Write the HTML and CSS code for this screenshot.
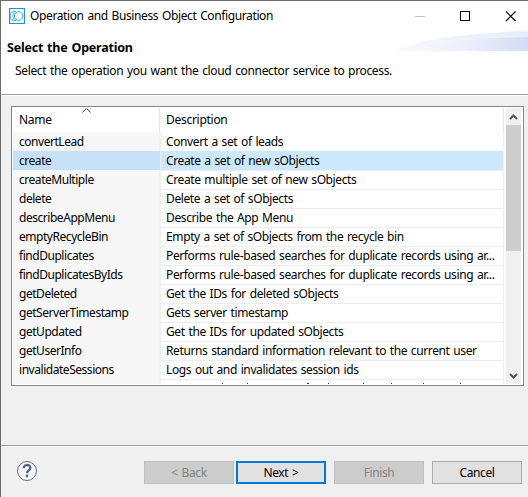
FILE: index.html
```
<!DOCTYPE html>
<html lang="en">
<head>
<meta charset="utf-8">
<title>Operation and Business Object Configuration</title>
<link rel="stylesheet" href="styles.css">
</head>
<body>
<div class="window">
  <div class="titlebar">
    <svg class="app-icon" width="16" height="16" viewBox="0 0 16 16" fill="none" stroke="#1a9ad0"><rect x=".5" y=".5" width="15" height="15" stroke-width="1.2"/><circle cx="9.7" cy="8" r="4.3" stroke-width=".9"/><path d="M7 3.6a4.6 4.6 0 1 0 0 8.8M5.5 4.6a4.5 4.5 0 0 0 0 6.800" stroke-width=".8"/></svg>
    <span class="title">Operation and Business Object Configuration</span>
    <svg class="controls" width="102" height="12" viewBox="0 0 102 12" fill="none"><path d="M0 6.500h10" stroke="#c4c4c4"/><rect x="45.500" y="1.500" width="9" height="9" stroke="#000"/><path d="M91 1.500l9.500 9.500M100.500 1.500L91 11" stroke="#000" stroke-width="1.1"/></svg>
  </div>
  <div class="banner">
    <svg class="swoosh" width="134" height="20" viewBox="0 0 134 20"><defs><linearGradient id="a"><stop offset="0" stop-color="#f7f9fd"/><stop offset="1" stop-color="#e6ecfa"/></linearGradient><linearGradient id="b"><stop offset="0" stop-color="#f7f9fd"/><stop offset=".5" stop-color="#edf1fb"/><stop offset="1" stop-color="#d3dcf4"/></linearGradient></defs><path d="M0 20Q35 3 134 0V20z" fill="url(#a)"/><path d="M2 20Q55 8 134 6V20z" fill="url(#b)"/></svg>
    <h1>Select the Operation</h1>
    <p>Select the operation you want the cloud connector service to process.</p>
  </div>
  <div class="content">
    <div class="table">
      <div class="grid">
        <div class="head"><span class="name">Name<svg class="sort" width="9" height="5" viewBox="0 0 9 5" fill="none" stroke="#555"><path d="M.5 4.500l4-4 4 4"/></svg></span><span class="desc">Description</span></div>
        <div class="row"><span class="name">convertLead</span><span class="desc">Convert a set of leads</span></div>
        <div class="row selected"><span class="name">create</span><span class="desc">Create a set of new sObjects</span></div>
        <div class="row"><span class="name">createMultiple</span><span class="desc">Create multiple set of new sObjects</span></div>
        <div class="row"><span class="name">delete</span><span class="desc">Delete a set of sObjects</span></div>
        <div class="row"><span class="name">describeAppMenu</span><span class="desc">Describe the App Menu</span></div>
        <div class="row"><span class="name">emptyRecycleBin</span><span class="desc">Empty a set of sObjects from the recycle bin</span></div>
        <div class="row"><span class="name">findDuplicates</span><span class="desc">Performs rule-based searches for duplicate records using ar...</span></div>
        <div class="row"><span class="name">findDuplicatesByIds</span><span class="desc">Performs rule-based searches for duplicate records using ar...</span></div>
        <div class="row"><span class="name">getDeleted</span><span class="desc">Get the IDs for deleted sObjects</span></div>
        <div class="row"><span class="name">getServerTimestamp</span><span class="desc">Gets server timestamp</span></div>
        <div class="row"><span class="name">getUpdated</span><span class="desc">Get the IDs for updated sObjects</span></div>
        <div class="row"><span class="name">getUserInfo</span><span class="desc">Returns standard information relevant to the current user</span></div>
        <div class="row"><span class="name">invalidateSessions</span><span class="desc">Logs out and invalidates session ids</span></div>
        <div class="row"><span class="name"></span><span class="desc"><svg class="clipped-line" width="320" height="5" viewBox="0 0 320 5" stroke="#333"><path d="M56 4.500h1M81 4.500h1M141 4.500h2M162 4.500h1M197 4.500h1M225 4.500h1M257 4.500h1M294 4.500h1"/></svg></span></div>
      </div>
      <div class="scrollbar">
        <svg width="15" height="17" viewBox="0 0 15 17" fill="none" stroke="#555" stroke-width="2"><path d="M4 11l3.500-3.500L11 11"/></svg>
        <div class="thumb"></div>
        <svg class="down" width="15" height="17" viewBox="0 0 15 17" fill="none" stroke="#555" stroke-width="2"><path d="M4 7l3.500 3.500L11 7"/></svg>
      </div>
    </div>
  </div>
  <div class="footer">
    <svg class="help" width="22" height="22" viewBox="0 0 22 22"><circle cx="11" cy="11" r="9.500" fill="#f5f6f9" stroke="#5c6d8e"/><path d="M7.700 8.300C7.700 4 14.300 4 14.300 7.900C14.300 10.300 11 10.300 11 13.300" fill="none" stroke="#56678c" stroke-width="2.300"/><circle cx="11" cy="16" r="1.400" fill="#56678c"/></svg>
    <button class="back" disabled>&lt; Back</button>
    <button class="next">Next &gt;</button>
    <button class="finish" disabled>Finish</button>
    <button class="cancel">Cancel</button>
  </div>
</div>
</body>
</html>
```
FILE: styles.css
```
* { box-sizing: border-box; }
body { margin: 0; width: 528px; height: 497px; overflow: hidden; font: 12px "Noto Sans", sans-serif; letter-spacing: -0.38px; word-spacing: 1px; color: #000; }
.window { height: 497px; border: solid #6b6b6b; border-width: 1px 0 0 1px; background: #f0f0f0; display: flex; flex-direction: column; }
.titlebar { height: 29px; background: #fff; display: flex; align-items: center; padding: 0 11px 0 8px; flex: none; }
.app-icon { margin-right: 5px; }
.title { letter-spacing: -0.38px; }
.controls { margin-left: auto; }
.banner { position: relative; height: 66px; flex: none; background: #fff; border-bottom: 1px solid #fff; box-shadow: inset 0 -1px #a0a0a0; }
.banner h1 { margin: 0; padding: 9px 0 0 6px; font-size: 12.5px; line-height: 18px; font-weight: 700; letter-spacing: -0.22px; }
.banner p { margin: 0; padding: 5px 0 0 14px; line-height: 18px; letter-spacing: -0.34px; }
.swoosh { position: absolute; right: 0; top: 1px; }
.content { padding: 10px 4px 0 10px; height: 349px; flex: none; }
.table { width: 513px; height: 280px; border: 1px solid #828790; padding: 1px; background: #fff; display: flex; justify-content: space-between; }
.grid { width: 491px; height: 276px; overflow: hidden; }
.head, .row { display: grid; grid-template-columns: 147px 344px; }
.head { height: 24px; line-height: 23px; letter-spacing: -0.28px; }
.head .name { position: relative; border-right: 1px solid #e5e5e5; }
.head .desc { border-right: 1px solid #e5e5e5; }
.sort { position: absolute; left: 69px; top: 0; }
.name { padding-left: 6px; }
.desc { padding-left: 6px; white-space: nowrap; }
.row { height: 19px; line-height: 19px; }
.row .name { background: #f7f7f7; border-bottom: 1px solid #ededed; border-right: 1px solid #edf0f7; letter-spacing: -0.46px; }
.row .desc { border: solid #edf0f7; border-width: 0 1px 1px 1px; border-bottom-color: #ededed; padding-left: 5px; }
.row.selected .name { background: #c5e0f7; border-right-color: #c5e0f7; }
.selected .desc { background: #cce8ff; }
.clipped-line { display: block; }
.scrollbar { width: 15px; margin-right: 1px; background: #f0f0f0; display: flex; flex-direction: column; }
.thumb { height: 126px; background: #cdcdcd; }
.down { margin-top: auto; }
.footer { border-top: 1px solid #a0a0a0; box-shadow: inset 0 1px #fff; flex: 1; display: flex; align-items: flex-start; padding: 15px 6px 0 15px; }
.help { margin: -1px auto 0 0; }
button { width: 90px; height: 23px; padding: 0; font: inherit; letter-spacing: inherit; word-spacing: inherit; color: #000; background: #e1e1e1; border: 1px solid #adadad; border-radius: 0; }
button:disabled { color: #838383; background: #ccc; border-color: #bfbfbf; }
.next { border: 2px solid #0078d7; margin-left: 2px; }
.finish, .cancel { margin-left: 8px; }
```
